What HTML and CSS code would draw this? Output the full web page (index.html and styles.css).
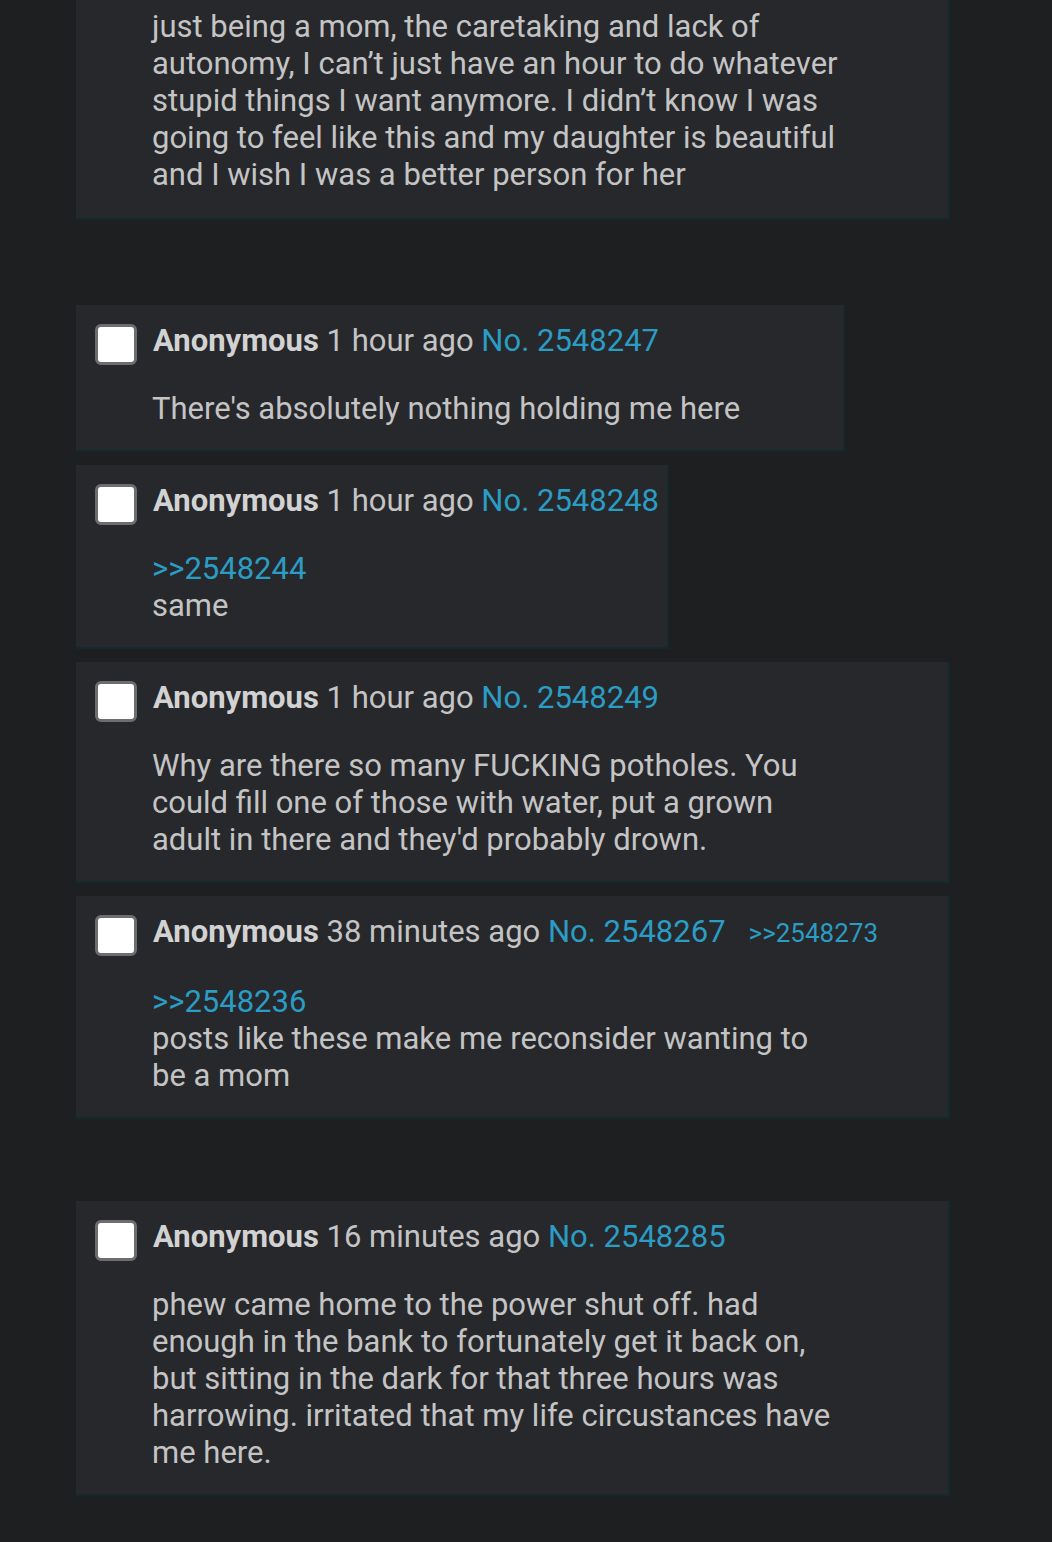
FILE: index.html
```html
<!DOCTYPE html>
<html lang="en">
<head>
<meta charset="utf-8">
<title>Thread</title>
<link rel="stylesheet" href="styles.css">
</head>
<body>
<div class="thread">
  <div class="post post-first">
    <div class="message">just being a mom, the caretaking and lack of autonomy, I can’t just have an hour to do whatever stupid things I want anymore. I didn’t know I was going to feel like this and my daughter is beautiful and I wish I was a better person for her</div>
  </div>

  <div class="post post-spaced">
    <div class="post-info">
      <span class="check"></span>
      <span class="info-text"><span class="name">Anonymous</span> <span class="time">1 hour ago</span> <a class="num">No. 2548247</a></span>
    </div>
    <div class="message">There's absolutely nothing holding me here</div>
  </div>

  <div class="post">
    <div class="post-info">
      <span class="check"></span>
      <span class="info-text"><span class="name">Anonymous</span> <span class="time">1 hour ago</span> <a class="num">No. 2548248</a></span>
    </div>
    <div class="message"><a class="quote">&gt;&gt;2548244</a><br>same</div>
  </div>

  <div class="post">
    <div class="post-info">
      <span class="check"></span>
      <span class="info-text"><span class="name">Anonymous</span> <span class="time">1 hour ago</span> <a class="num">No. 2548249</a></span>
    </div>
    <div class="message">Why are there so many FUCKING potholes. You could fill one of those with water, put a grown adult in there and they'd probably drown.</div>
  </div>

  <div class="post">
    <div class="post-info">
      <span class="check"></span>
      <span class="info-text"><span class="name">Anonymous</span> <span class="time">38 minutes ago</span> <a class="num">No. 2548267</a><a class="backlink">&gt;&gt;2548273</a></span>
    </div>
    <div class="message"><a class="quote">&gt;&gt;2548236</a><br>posts like these make me reconsider wanting to be a mom</div>
  </div>

  <div class="post post-spaced-b">
    <div class="post-info">
      <span class="check"></span>
      <span class="info-text"><span class="name">Anonymous</span> <span class="time">16 minutes ago</span> <a class="num">No. 2548285</a></span>
    </div>
    <div class="message">phew came home to the power shut off. had enough in the bank to fortunately get it back on, but sitting in the dark for that three hours was harrowing. irritated that my life circustances have me here.</div>
  </div>
</div>
</body>
</html>
```

FILE: styles.css
```css
html, body {
  margin: 0;
  padding: 0;
  background: #1e1f21;
}

body {
  font-family: Roboto, "Noto Sans", sans-serif;
  font-size: 31px;
  font-weight: 400;
  line-height: 37px;
  color: #c4c4c4;
}

.thread {
  padding-left: 76px;
  width: 874px;
}

.post {
  box-sizing: border-box;
  width: fit-content;
  max-width: 874px;
  background: #27282c;
  padding: 17px 8px 23px 19px;
  border-right: 2px solid #122a2b;
  border-bottom: 2px solid #122a2b;
  margin-bottom: 13px;
}

.post-first {
  width: 874px;
  padding-top: 8px;
  padding-bottom: 25px;
}

.post-first .message {
  margin-top: 0;
}

.post-spaced {
  margin-top: 85px;
}

.post-spaced-b {
  margin-top: 82px;
}

.post-info {
  display: flex;
  align-items: flex-start;
  white-space: nowrap;
}

.check {
  box-sizing: border-box;
  flex: none;
  width: 42px;
  height: 41px;
  margin-top: 2px;
  margin-bottom: -6px;
  margin-right: 16px;
  background: #ffffff;
  border: 3px solid #6d6d6d;
  border-radius: 6px;
}

.name {
  font-weight: 700;
  color: #d2d2d2;
}

.time {
  color: #c4c4c4;
}

.num,
.quote,
.backlink {
  color: #2b9cc3;
  text-decoration: none;
}

.backlink {
  font-size: 26px;
  margin-left: 23px;
}

.message {
  margin: 31px 95px 0 57px;
}
```
